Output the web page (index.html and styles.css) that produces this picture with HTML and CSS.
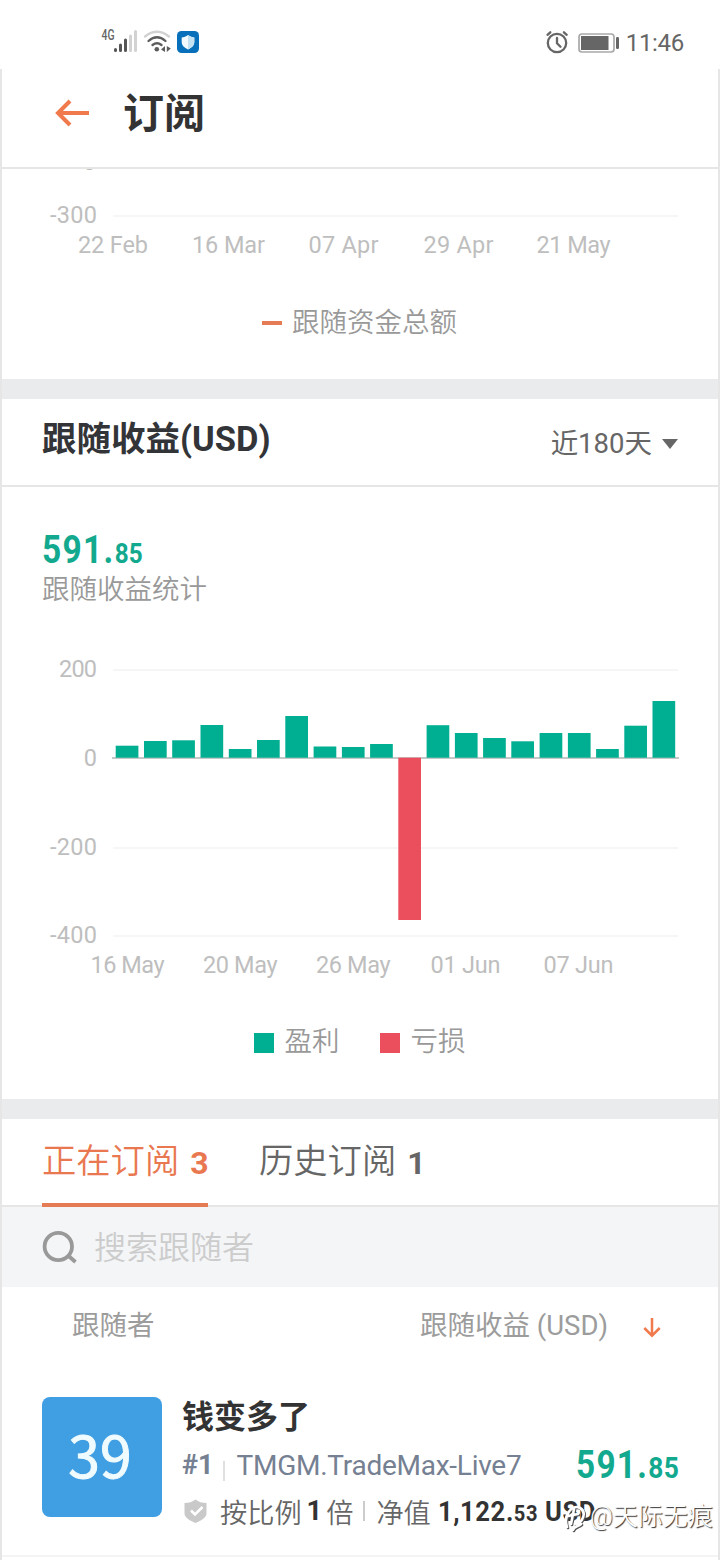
FILE: index.html
```html
<!DOCTYPE html>
<html lang="zh-CN">
<head>
<meta charset="utf-8">
<title>订阅</title>
<link rel="stylesheet" href="styles.css">
</head>
<body>
<div class="status">
  <svg class="status-left" width="104" height="30" viewBox="98 26 104 30">
    <text x="101.500" y="40.300" font-size="14" font-weight="500" fill="#666" textLength="13" lengthAdjust="spacingAndGlyphs">4G</text>
    <g stroke-width="3" stroke-linecap="round">
      <path d="M115.500 49.500v1" stroke="#555"/><path d="M120.500 45v5.500M125.500 40v10.500" stroke="#555"/>
      <path d="M130.500 36v14.500M135.500 31.500v19" stroke="#d2d2d2"/>
    </g>
    <g fill="none" stroke-width="2.300" stroke-linecap="round">
      <path d="M145 36.500Q157 27 169 36.500" stroke="#d2d2d2"/>
      <path d="M148.500 41Q157 33.500 165.500 41M152.500 45Q157 41.500 161.500 45" stroke="#5c5c5c"/>
    </g>
    <circle cx="156.800" cy="49.300" r="2.300" fill="#5c5c5c"/>
    <path d="M165 46v6l-4-2.500zM166.800 46l4 2.500-4 3.500z" fill="#5c5c5c"/>
    <rect x="177" y="31" width="22" height="22" rx="4.500" fill="#0870bb"/>
    <path d="M188 35c2 1.600 4 2.200 6.300 2.400v5c0 3-2.600 5.300-6.300 7-3.700-1.700-6.300-4-6.300-7v-5c2.300-.2 4.300-.8 6.300-2.400z" fill="#f4fbff"/>
    <path d="M188 35c2 1.600 4 2.200 6.300 2.400v5c0 3-2.600 5.300-6.300 7z" fill="#c5e2f3"/>
  </svg>
  <div class="status-right">
    <svg width="76" height="28" viewBox="544 28 76 28">
      <g fill="none" stroke="#666" stroke-width="2.300" stroke-linecap="round">
        <circle cx="557" cy="42" r="9.200"/><path d="M557 37v5.300l3.500 3.500M547.500 33.800l2.800-2.500M566.700 33.800l-2.800-2.500"/>
      </g>
      <rect x="579" y="33" width="35" height="18" rx="3" fill="none" stroke="#a9a9a9" stroke-width="1.700"/>
      <rect x="581" y="35" width="27.500" height="14" fill="#666"/>
      <rect x="616" y="36" width="3" height="12" rx="1.200" fill="#666"/>
    </svg>
    <span class="clock">11:46</span>
  </div>
</div>
<div class="app">
  <header class="header">
    <svg width="36" height="30" viewBox="54 98 36 30"><path d="M89 113H58M70 101L58 113l12 12" fill="none" stroke="#f17a4c" stroke-width="4"/></svg>
    <h1 class="title">订阅</h1>
  </header>

  <section class="funds">
    <svg class="chart axis" width="716" height="100" viewBox="2 169 716 100">
      <text x="96" y="169.500" text-anchor="end">0</text>
      <path d="M113 216H678" stroke="#f6f6f6" stroke-width="2"/>
      <text x="50" y="223" textLength="47">-300</text>
      <text x="78" y="253" textLength="70">22 Feb</text>
      <text x="192" y="253" textLength="73">16 Mar</text>
      <text x="308.500" y="253" textLength="70">07 Apr</text>
      <text x="423.500" y="253" textLength="70">29 Apr</text>
      <text x="536.500" y="253" textLength="74">21 May</text>
    </svg>
    <div class="legend"><i class="dash"></i><span>跟随资金总额</span></div>
  </section>

  <div class="gap"></div>

  <section class="income">
    <div class="section-head">
      <h2>跟随收益(USD)</h2>
      <div class="range"><span>近180天</span><svg width="16" height="10" viewBox="0 0 16 10"><path d="M0 0h16L8 10z" fill="#666"/></svg></div>
    </div>
    <div class="summary">
      <svg class="amount" width="102" height="32" viewBox="42 534 102 32">
        <text x="42" y="563" textLength="101" lengthAdjust="spacingAndGlyphs"><tspan class="whole">591.</tspan><tspan class="cents">85</tspan></text>
      </svg>
      <p>跟随收益统计</p>
    </div>
    <svg class="chart axis" width="716" height="340" viewBox="2 645 716 340">
      <path d="M113 670H678M113 848H678M113 936H678" stroke="#f6f6f6" stroke-width="2"/>
      <path d="M112 758H679" stroke="#c4c8c7" stroke-width="2"/>
      <g fill="#00ae92">
        <rect x="115.700" y="745.700" width="22.700" height="12"/>
        <rect x="144" y="741" width="22.700" height="16.700"/>
        <rect x="172.200" y="740.300" width="22.700" height="17.400"/>
        <rect x="200.500" y="725" width="22.700" height="32.700"/>
        <rect x="228.800" y="749" width="22.700" height="8.700"/>
        <rect x="257" y="740" width="22.700" height="17.700"/>
        <rect x="285.300" y="716" width="22.700" height="41.700"/>
        <rect x="313.600" y="746.500" width="22.700" height="11.200"/>
        <rect x="341.900" y="747" width="22.700" height="10.700"/>
        <rect x="370.100" y="744" width="22.700" height="13.700"/>
        <rect x="426.600" y="725.200" width="22.700" height="32.500"/>
        <rect x="454.900" y="733" width="22.700" height="24.700"/>
        <rect x="483.100" y="738" width="22.700" height="19.700"/>
        <rect x="511.300" y="741.300" width="22.700" height="16.400"/>
        <rect x="539.600" y="733" width="22.700" height="24.700"/>
        <rect x="567.900" y="733" width="22.700" height="24.700"/>
        <rect x="596.100" y="749" width="22.700" height="8.700"/>
        <rect x="624.300" y="725.700" width="22.700" height="32"/>
        <rect x="652.500" y="701" width="22.700" height="56.700"/>
      </g>
      <rect x="398.300" y="757.700" width="22.700" height="162.300" fill="#eb4f5d"/>
      <text x="59" y="677" textLength="38">200</text>
      <text x="97" y="766" text-anchor="end">0</text>
      <text x="50" y="855" textLength="47">-200</text>
      <text x="50" y="943" textLength="47">-400</text>
      <text x="90.500" y="973" textLength="74">16 May</text>
      <text x="203" y="973" textLength="74.500">20 May</text>
      <text x="316" y="973" textLength="74.500">26 May</text>
      <text x="430.500" y="973" textLength="70">01 Jun</text>
      <text x="543.500" y="973" textLength="70">07 Jun</text>
    </svg>
    <div class="legend pair">
      <div class="key"><i class="box"></i><span>盈利</span></div>
      <div class="key"><i class="box loss"></i><span>亏损</span></div>
    </div>
  </section>

  <div class="gap"></div>

  <nav class="tabs">
    <div class="tab active"><span>正在订阅</span><b>3</b></div>
    <div class="tab"><span>历史订阅</span><b>1</b></div>
  </nav>
  <div class="search">
    <svg width="36" height="34" viewBox="42 1229 36 34"><g fill="none" stroke="#999" stroke-width="3.800"><circle cx="58.300" cy="1245.500" r="13.700"/><path d="M68 1254.500l7.500 6.500"/></g></svg>
    <span>搜索跟随者</span>
  </div>
  <div class="cols">
    <span>跟随者</span>
    <div class="sort"><span>跟随收益 (USD)</span><svg width="18" height="22" viewBox="0 0 18 22"><path d="M9 1v18M1.300 11L9 18.700 16.700 11" fill="none" stroke="#f17a4c" stroke-width="2.500"/></svg></div>
  </div>
  <article class="row">
    <div class="avatar">39</div>
    <div class="info">
      <h3>钱变多了</h3>
      <div class="line broker"><b>#1</b><i class="sep"></i><span class="server">TMGM.TradeMax-Live7</span>
        <svg class="amount" width="103" height="32" viewBox="575 1448 103 32">
          <text x="576" y="1477" textLength="103" lengthAdjust="spacingAndGlyphs"><tspan class="whole">591.</tspan><tspan class="cents large">85</tspan></text>
        </svg>
      </div>
      <div class="line detail">
        <svg width="24" height="26" viewBox="182 1499 24 26"><path d="M196 1500.500c3 2.500 6.500 3.500 11 3.500v10.500c0 4-5 7-11 9.500-6-2.500-11-5.500-11-9.500V1504c4.500 0 8-1 11-3.500z" fill="#c9c9c9" transform="translate(-0.500)"/><path d="M191 1511.500l4 4 7.500-7.500" fill="none" stroke="#fff" stroke-width="2.500"/></svg>
        <span class="ratio">按比例</span><b class="times">1</b><span>倍</span><i class="sep small"></i><span class="net">净值</span>
        <svg class="equity" width="160" height="30" viewBox="438 1496 160 30">
          <text x="438" y="1521" textLength="158" lengthAdjust="spacingAndGlyphs">1,122.<tspan class="fraction">53</tspan> USD</text>
        </svg>
      </div>
    </div>
  </article>
  <div class="watermark">
    <svg width="28" height="32" viewBox="560 1500 28 32"><g fill="none" stroke-linecap="round"><path d="M566 1527c-4-12 5-23 13-19 7 4 3 15-5 16M573 1509l-3 15M567 1516l10-2M572 1530c1-4 5-3 8-6" stroke="#555" stroke-width="2.600"/><path d="M565 1526c-4-12 5-23 13-19 7 4 3 15-5 16M572 1508l-3 15M566 1515l10-2M571 1529c1-4 5-3 8-6" stroke="#fff" stroke-width="2.600"/></g></svg>
    <span>@天际无痕</span>
  </div>
</div>
</body>
</html>
```
FILE: styles.css
```css
* { box-sizing: border-box; }
body { margin: 0; width: 720px; height: 1560px; overflow: hidden; background: #fff; font-family: Roboto, "Noto Sans CJK SC", sans-serif; color: #666; }
h1, h2, h3, p { margin: 0; }
svg { display: block; flex: none; overflow: visible; }
span, b { white-space: nowrap; }

.status { height: 69px; display: flex; justify-content: space-between; align-items: flex-start; padding: 26px 36px 0 98px; }
.status-right { display: flex; align-items: center; gap: 6px; padding-top: 2px; }
.clock { font-size: 24px; line-height: 30px; letter-spacing: -0.300px; }

.app { position: relative; height: 1491px; overflow: hidden; border: 2px solid #e6e6e6; border-width: 0 2px; }
.header { height: 100px; padding: 0 0 10px 52px; display: flex; align-items: center; gap: 33px; border-bottom: 2px solid #e6e6e6; }
.title { font-size: 41px; line-height: 60px; font-weight: 700; color: #333; padding-top: 2px; }

.funds { height: 210px; }
.chart { overflow: hidden; }
.axis text { font-family: Roboto, sans-serif; font-weight: 400; font-size: 23.500px; fill: #bebebe; }
.legend { display: flex; align-items: center; justify-content: center; gap: 10px; margin-top: 34px; height: 40px; font-size: 27.500px; line-height: 40px; color: #999; font-weight: 350; }
.dash { width: 20px; height: 4px; background: #e47b55; }
.legend span { margin-right: 1px; }
.pair { gap: 39px; margin-top: 37px; }
.key { display: flex; align-items: center; gap: 11px; }
.box { width: 20px; height: 20px; background: #00ae92; margin-top: 1px; }
.loss { background: #eb4f5d; }
.gap { height: 20px; background: #eaebed; }

.income { height: 700px; }
.section-head { height: 88px; display: flex; justify-content: space-between; align-items: center; padding: 0 40px; border-bottom: 2px solid #e6e6e6; }
.section-head h2 { font-size: 34.500px; line-height: 50px; color: #333438; padding-bottom: 6px; }
.range { display: flex; align-items: center; gap: 10px; font-size: 27.500px; line-height: 40px; padding-top: 3px; }
.summary { height: 158px; padding: 47px 40px 0; }
.amount text { font-family: Roboto, sans-serif; font-weight: 700; fill: #12a98e; }
.whole { font-size: 38px; letter-spacing: 1.500px; }
.cents { font-size: 27.500px; letter-spacing: 0.300px; }
.large { font-size: 30px; }
.summary p { font-size: 27.500px; line-height: 40px; color: #999; margin-top: 4px; font-weight: 350; }

.tabs { height: 88px; padding-left: 40px; display: flex; gap: 51px; border-bottom: 2px solid #e6e6e6; font-size: 34.300px; line-height: 50px; }
.tab { height: 88px; padding-top: 17px; display: flex; gap: 11px; font-weight: 350; }
.tab b { font-size: 32px; line-height: 54px; width: 18px; font-weight: 700; }
.active { width: 166px; color: #e97851; border-bottom: 4px solid #e47b55; }
.search { height: 80px; background: #f4f5f7; padding: 1px 0 0 40px; display: flex; align-items: center; gap: 16px; font-size: 32px; line-height: 46px; color: #ccc; font-weight: 350; }
.search svg { margin-top: -1px; }
.cols { height: 80px; display: flex; justify-content: space-between; align-items: center; padding: 0 57px 2px 70px; font-size: 27.500px; line-height: 40px; color: #9c9c9c; }
.sort { display: flex; align-items: center; gap: 35px; }
.sort svg { margin-top: 3px; }
.row { height: 190px; padding: 30px 40px 0; display: flex; gap: 20px; border-bottom: 2px solid #f4f4f4; }
.avatar { width: 120px; height: 120px; flex: none; border-radius: 8px; background: #409ee3; color: #effbff; font: 400 57px/113px "Noto Sans CJK SC", sans-serif; -webkit-text-stroke: 1px #effbff; text-align: center; padding-right: 4px; }
.info { flex: 1; min-width: 0; }
.info h3 { font-size: 32px; line-height: 40px; color: #333; }
.line { display: flex; align-items: center; }
.broker { height: 46px; margin-top: 5px; font-size: 28px; color: #758092; }
.server { letter-spacing: -0.250px; }
.broker .amount { margin-left: auto; }
.broker b { font-size: 27px; }
.sep { width: 2px; height: 20px; background: #e0e0e0; margin: 12px 11px 0 10px; }
.detail { height: 46px; font-size: 27.200px; font-weight: 350; }
.detail b { font-weight: 700; }
.ratio { margin-left: 14px; }
.times { color: #333; margin: 0 4px 0 5px; }
.sep.small { margin: 0 11px 0 10px; background: #ccc; }
.net { margin-right: 7px; }
.equity text { font-family: Roboto, sans-serif; font-weight: 700; font-size: 28px; letter-spacing: 0.600px; fill: #333; }
.fraction { font-size: 22px; }
.watermark { position: absolute; left: 560px; top: 1430px; display: flex; align-items: center; color: #fff; font-size: 25px; line-height: 36px; font-weight: 350; text-shadow: 1px 1px 1px #333; }
```
